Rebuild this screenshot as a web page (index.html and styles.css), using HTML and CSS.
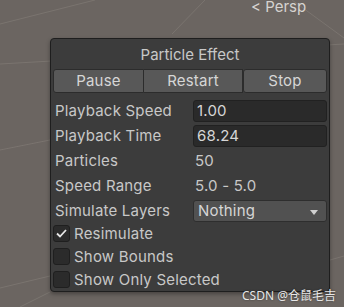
FILE: index.html
```html
<!DOCTYPE html>
<html lang="en">
<head>
  <meta charset="UTF-8" />
  <title>Particle Effect</title>
  <link rel="stylesheet" href="styles.css">
</head>
<body>

  <div class="scene">
    <!-- scene grid lines -->
    <svg class="grid" width="344" height="307" viewBox="0 0 344 307">
      <g stroke="#7a746f" stroke-width="1" fill="none">
        <line x1="0" y1="24" x2="95" y2="0" />
        <line x1="0" y1="64" x2="344" y2="44" />
        <line x1="172" y1="34" x2="205" y2="0" />
        <line x1="292" y1="0" x2="344" y2="38" />
        <line x1="0" y1="150" x2="50" y2="140" />
        <line x1="0" y1="288" x2="50" y2="276" />
        <line x1="20" y1="307" x2="50" y2="292" />
        <line x1="330" y1="260" x2="344" y2="256" />
      </g>
    </svg>

    <div class="persp">&lt; Persp</div>

    <div class="panel">
      <div class="panel-title">Particle Effect</div>

      <div class="btn-row">
        <button class="btn">Pause</button>
        <button class="btn">Restart</button>
        <button class="btn">Stop</button>
      </div>

      <div class="props">
        <div class="prop">
          <span class="label">Playback Speed</span>
          <span class="field">1.00</span>
        </div>
        <div class="prop">
          <span class="label">Playback Time</span>
          <span class="field">68.24</span>
        </div>
        <div class="prop">
          <span class="label">Particles</span>
          <span class="value">50</span>
        </div>
        <div class="prop">
          <span class="label">Speed Range</span>
          <span class="value">5.0 - 5.0</span>
        </div>
        <div class="prop">
          <span class="label">Simulate Layers</span>
          <span class="dropdown">Nothing <span class="arrow"></span></span>
        </div>
      </div>

      <div class="toggles">
        <label class="toggle">
          <span class="box checked">
            <svg width="11" height="9" viewBox="0 0 11 9"><path d="M1 4.5 L4 7.5 L10 1" stroke="#e6e6e6" stroke-width="1.8" fill="none" /></svg>
          </span>
          Resimulate
        </label>
        <label class="toggle"><span class="box"></span>Show Bounds</label>
        <label class="toggle"><span class="box"></span>Show Only Selected</label>
      </div>
    </div>

    <div class="watermark">CSDN @仓鼠毛吉</div>
  </div>

</body>
</html>
```

FILE: styles.css
```css
* { box-sizing: border-box; }

body {
  margin: 0;
  background: #6b6561;
  font-family: 'Inter', 'Noto Sans', sans-serif;
}

.scene {
  position: relative;
  width: 344px;
  height: 307px;
  overflow: hidden;
  padding-top: 38px;
}

.grid {
  position: absolute;
  left: 0;
  top: 0;
}

.persp {
  position: absolute;
  top: -3px;
  left: 251px;
  font-size: 15px;
  color: #d6d3d0;
}

.panel {
  position: relative;
  margin-left: 50px;
  width: 280px;
  background: #3c3c3c;
  border: 1px solid #1e1e1e;
  border-radius: 4px;
  padding: 0 2px;
  color: #c8c8c8;
  font-size: 15px;
  letter-spacing: 0.2px;
  box-shadow: 0 2px 4px rgba(0, 0, 0, 0.35);
}

.panel-title {
  height: 30px;
  line-height: 31px;
  text-align: center;
  letter-spacing: 0;
}

.btn-row {
  display: grid;
  grid-template-columns: 91px 99px 1fr;
  height: 24px;
}

.btn {
  font: inherit;
  letter-spacing: inherit;
  color: #d6d6d6;
  background: #585858;
  border: 1px solid #2c2c2c;
  border-left: none;
  padding: 0;
  line-height: 22px;
}

.btn:first-child {
  border-left: 1px solid #2c2c2c;
  border-radius: 3px 0 0 3px;
}

.btn:last-child {
  border-left: 1px solid #2c2c2c;
  border-radius: 3px;
}

.props {
  margin-top: 5px;
}

.prop {
  display: grid;
  grid-template-columns: 140px 1fr;
  align-items: center;
  height: 25px;
}

.label {
  padding-left: 2px;
}

.field {
  height: 22px;
  line-height: 20px;
  background: #2a2a2a;
  border: 1px solid #212121;
  border-radius: 3px;
  padding-left: 3px;
  color: #d6d6d6;
}

.value {
  padding-left: 2px;
}

.dropdown {
  position: relative;
  height: 22px;
  line-height: 20px;
  background: #515151;
  border: 1px solid #2e2e2e;
  border-radius: 3px;
  padding-left: 4px;
  color: #d6d6d6;
}

.arrow {
  position: absolute;
  right: 8px;
  top: 9px;
  border-left: 4px solid transparent;
  border-right: 4px solid transparent;
  border-top: 5px solid #d0d0d0;
}

.toggles {
  margin-top: -1px;
}

.toggle {
  display: flex;
  align-items: center;
  gap: 4px;
  height: 23px;
}

.box {
  width: 17px;
  height: 17px;
  background: #2b2b2b;
  border: 1px solid #1f1f1f;
  border-radius: 3px;
  display: flex;
  align-items: center;
  justify-content: center;
}

.watermark {
  position: absolute;
  left: 242px;
  top: 286px;
  font-size: 12px;
  color: #e8e8e8;
  text-shadow: 0 0 2px rgba(0, 0, 0, 0.5);
  font-family: 'Noto Sans', 'Noto Sans CJK SC', sans-serif;
}
```
